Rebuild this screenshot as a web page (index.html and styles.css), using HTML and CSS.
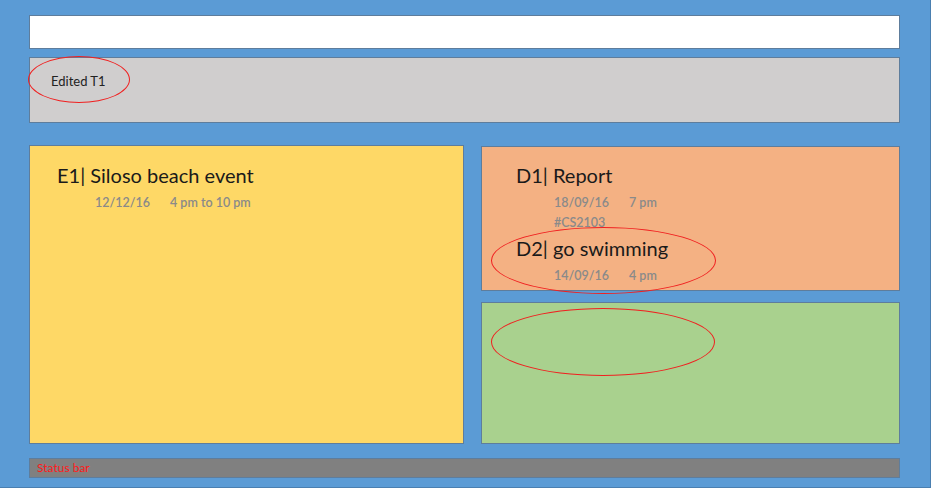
FILE: index.html
```html
<!DOCTYPE html>
<html>
<head>
<meta charset="utf-8">
<link rel="stylesheet" href="styles.css">
</head>
<body>
<div class="app">
  <div class="input-bar"></div>
  <div class="feedback"><span class="feedback-text">Edited T1</span></div>
  <div class="main">
    <div class="panel events">
      <div class="task">
        <div class="task-title">E1| Siloso beach event</div>
        <div class="task-meta"><span>12/12/16</span><span>4 pm to 10 pm</span></div>
      </div>
    </div>
    <div class="right-col">
      <div class="panel deadlines">
        <div class="task">
          <div class="task-title">D1| Report</div>
          <div class="task-meta"><span>18/09/16</span><span>7 pm</span></div>
          <div class="task-tag">#CS2103</div>
        </div>
        <div class="task task-second">
          <div class="task-title">D2| go swimming</div>
          <div class="task-meta"><span>14/09/16</span><span>4 pm</span></div>
        </div>
      </div>
      <div class="panel floating"></div>
    </div>
  </div>
  <div class="status-bar">Status bar</div>
  <div class="ring ring-feedback"></div>
  <div class="ring ring-d2"></div>
  <div class="ring ring-float"></div>
</div>
</body>
</html>
```

FILE: styles.css
```css
html, body {
  margin: 0;
  padding: 0;
}
body {
  width: 931px;
  height: 488px;
  background: #5B9BD5;
  font-family: Lato, "Open Sans", sans-serif;
  overflow: hidden;
}
.app {
  position: relative;
  box-sizing: border-box;
  width: 931px;
  height: 488px;
  padding: 15px 30px 9px 29px;
  display: flex;
  flex-direction: column;
  border-right: 1px solid #4A7FB0;
  border-bottom: 1px solid #4A7FB0;
}
.app > * {
  flex-shrink: 0;
}
.input-bar {
  height: 34px;
  box-sizing: border-box;
  background: #FFFFFF;
  border: 1px solid #5E7D9C;
}
.feedback {
  margin-top: 8px;
  height: 66px;
  box-sizing: border-box;
  background: #D0CECE;
  border: 1px solid #5E7D9C;
  padding: 12px 0 0 21px;
}
.feedback-text {
  font-size: 13px;
  color: #222222;
  line-height: 18px;
}
.main {
  margin-top: 22px;
  height: 299px;
  display: flex;
  gap: 17px;
}
.panel {
  box-sizing: border-box;
  border: 1px solid #5E7D9C;
}
.events {
  width: 435px;
  background: #FED866;
  padding: 16px 0 0 27px;
}
.right-col {
  flex: 1;
  display: flex;
  flex-direction: column;
  gap: 11px;
  padding-top: 1px;
}
.deadlines {
  height: 145px;
  flex-shrink: 0;
  background: #F4B183;
  padding: 15px 0 0 34px;
}
.floating {
  flex: 1;
  background: #A9D18E;
}
.task-title {
  font-size: 20px;
  color: #1A1A1A;
  line-height: 26px;
}
.task-meta {
  margin-top: 7px;
  padding-left: 38px;
  font-size: 12.5px;
  font-weight: 600;
  color: #8A8A8A;
  display: flex;
  gap: 20px;
  line-height: 16px;
}
.task-tag {
  padding-left: 38px;
  font-size: 12.5px;
  font-weight: 600;
  color: #8A8A8A;
  line-height: 14px;
  margin-top: 5px;
}
.task-second {
  margin-top: 5px;
}
.status-bar {
  margin-top: 14px;
  height: 20px;
  box-sizing: border-box;
  background: #808080;
  border: 1px solid #5E7D9C;
  color: #FF1A1A;
  font-size: 12px;
  line-height: 18px;
  padding-left: 7px;
}
.ring {
  position: absolute;
  box-sizing: border-box;
  border: 1.5px solid #F02020;
  border-radius: 50%;
}
.ring-feedback {
  left: 28px;
  top: 56px;
  width: 102px;
  height: 47px;
}
.ring-d2 {
  left: 491px;
  top: 227px;
  width: 225px;
  height: 67px;
}
.ring-float {
  left: 491px;
  top: 308px;
  width: 224px;
  height: 68px;
}
```
